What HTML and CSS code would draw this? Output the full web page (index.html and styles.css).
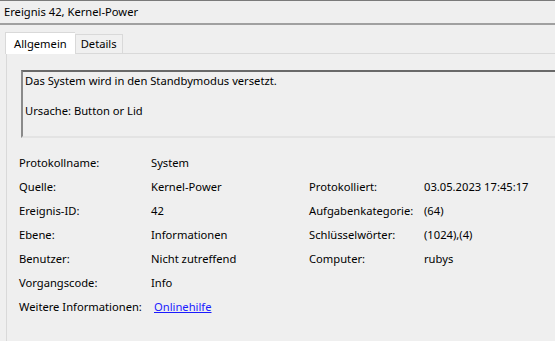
FILE: index.html
```html
<!DOCTYPE html>
<html lang="de">
<head>
  <meta charset="UTF-8">
  <title>Ereignis 42, Kernel-Power</title>
  <link rel="stylesheet" href="styles.css">
</head>
<body>
  <div class="window">
    <div class="caption">Ereignis 42, Kernel-Power</div>

    <div class="tabs">
      <div class="tab active">Allgemein</div>
      <div class="tab">Details</div>
    </div>

    <div class="page">
      <div class="message">
        <p>Das System wird in den Standbymodus versetzt.</p>
        <p>Ursache: Button or Lid</p>
      </div>

      <div class="props">
        <span>Protokollname:</span><span>System</span><span></span><span></span>
        <span>Quelle:</span><span>Kernel-Power</span><span>Protokolliert:</span><span>03.05.2023 17:45:17</span>
        <span>Ereignis-ID:</span><span>42</span><span>Aufgabenkategorie:</span><span>(64)</span>
        <span>Ebene:</span><span>Informationen</span><span>Schlüsselwörter:</span><span>(1024),(4)</span>
        <span>Benutzer:</span><span>Nicht zutreffend</span><span>Computer:</span><span>rubys</span>
        <span>Vorgangscode:</span><span>Info</span><span></span><span></span>
        <span>Weitere Informationen:</span><a href="#" class="link">Onlinehilfe</a><span></span><span></span>
      </div>
    </div>
  </div>
</body>
</html>
```

FILE: styles.css
```css
body {
  margin: 0;
  background-color: #efefef;
  font-family: 'Noto Sans', 'Open Sans', sans-serif;
  font-size: 11.2px;
  color: #000;
}
.window {
  width: 555px;
  height: 341px;
  overflow: hidden;
  border-top: 1px solid #7a7a7a;
  box-sizing: border-box;
}
.caption {
  height: 22px;
  line-height: 22px;
  padding-left: 4px;
  border-bottom: 2px solid #a0a0a0;
}
.tabs {
  display: flex;
  align-items: flex-end;
  height: 28px;
  padding-left: 5px;
}
.tab {
  height: 18px;
  line-height: 18px;
  padding: 0 5px;
  border: 1px solid #d9d9d9;
  border-bottom: none;
  background-color: #f0f0f0;
}
.tab.active {
  height: 21px;
  line-height: 22px;
  padding: 0 8px;
  background-color: #fff;
  border-right: none;
  margin-bottom: -1px;
  position: relative;
}
.page {
  margin-left: 6px;
  border-left: 1px solid #d9d9d9;
  border-top: 1px solid #d9d9d9;
  height: 300px;
}
.message {
  margin: 16px 0 0 14px;
  height: 62px;
  padding: 1px 2px;
  border-top: 2px solid #696969;
  border-left: 2px solid #8a8a8a;
  border-bottom: 2px solid #e3e3e3;
}
.message p {
  margin: 0 0 15px;
  line-height: 15px;
}
.props {
  display: grid;
  grid-template-columns: 132px 158px 115px auto;
  grid-auto-rows: 24px;
  align-items: center;
  margin: 12px 0 0 12px;
}
.link {
  color: #1a1aff;
  margin-left: 3px;
}
```
